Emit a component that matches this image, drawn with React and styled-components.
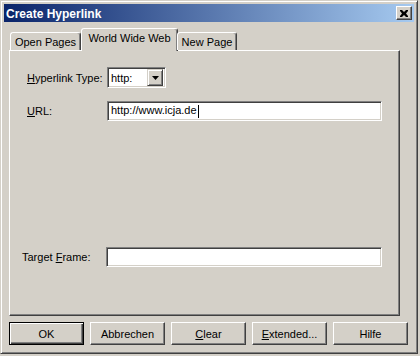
import React from 'react'
import styled, { createGlobalStyle } from 'styled-components'

const Global = createGlobalStyle`
    body {
        margin: 0;
        background: #d4d0c8;
        font-family: "Liberation Sans", Arial, sans-serif;
        font-size: 11px;
        color: #000;
    }
`

const Window = styled.div`
    width: 418px;
    height: 354px;
    box-sizing: border-box;
    background: #d4d0c8;
    border: 1px solid;
    border-color: #d4d0c8 #404040 #404040 #d4d0c8;
    box-shadow: inset 1px 1px #fff, inset -1px -1px #808080;
    padding: 3px;
    display: flex;
    flex-direction: column;
`

const TitleBar = styled.div`
    height: 18px;
    display: flex;
    align-items: center;
    justify-content: space-between;
    padding: 0 2px 0 2px;
    background: linear-gradient(to right, #0a246a, #a6caf0);
`

const Title = styled.span`
    color: #fff;
    font-weight: bold;
    font-size: 12px;
    padding-top: 1px;
`

const CloseBox = styled.div`
    width: 16px;
    height: 14px;
    box-sizing: border-box;
    background: #d4d0c8;
    border: 1px solid;
    border-color: #fff #404040 #404040 #fff;
    box-shadow: inset -1px -1px #808080;
    display: flex;
    align-items: center;
    justify-content: center;
`

const Body = styled.div`
    flex: 1;
    display: flex;
    flex-direction: column;
    padding: 6px 5px 0 5px;
`

const TabRow = styled.div`
    display: flex;
    align-items: flex-end;
    height: 22px;
    padding-left: 1px;
    position: relative;
    z-index: 1;
`

const Tab = styled.div`
    box-sizing: border-box;
    width: ${p => p.w}px;
    height: ${p => (p.active ? 23 : 18)}px;
    margin-bottom: ${p => (p.active ? -1 : 0)}px;
    background: #d4d0c8;
    border: 1px solid;
    border-bottom: none;
    border-color: #fff #404040 transparent #fff;
    border-radius: 3px 3px 0 0;
    box-shadow: inset -1px 0 #808080;
    display: flex;
    align-items: ${p => (p.active ? 'flex-start' : 'center')};
    padding-top: ${p => (p.active ? 3 : 0)}px;
    justify-content: center;
    font-size: 11px;
    white-space: nowrap;
    margin-right: ${p => (p.active ? -1 : 0)}px;
`

const Panel = styled.div`
    width: 391px;
    height: 266px;
    box-sizing: border-box;
    border: 1px solid;
    border-color: #fff #404040 #404040 #fff;
    box-shadow: inset -1px -1px #808080;
    display: flex;
    flex-direction: column;
    padding: 16px 17px 48px 17px;
`

const Row = styled.div`
    display: flex;
    align-items: center;
    margin-top: ${p => p.top || 0}px;
    margin-left: ${p => p.shift || 0}px;
`

const Label = styled.span`
    width: ${p => p.w || 80}px;
    flex: none;
`

const Sunken = styled.div`
    box-sizing: border-box;
    width: ${p => p.w}px;
    height: ${p => p.h}px;
    background: #fff;
    border: 1px solid;
    border-color: #808080 #fff #fff #808080;
    box-shadow: inset 1px 1px #404040, inset -1px -1px #d4d0c8;
    display: flex;
    align-items: center;
    padding: 0 2px 0 3px;
`

const Grow = styled.span`
    flex: 1;
`

const Caret = styled.span`
    display: inline-block;
    width: 1px;
    height: 13px;
    background: #000;
    margin-left: 1px;
    vertical-align: middle;
`

const DropButton = styled.div`
    width: 16px;
    height: 17px;
    box-sizing: border-box;
    background: #d4d0c8;
    border: 1px solid;
    border-color: #d4d0c8 #404040 #404040 #d4d0c8;
    box-shadow: inset 1px 1px #fff, inset -1px -1px #808080;
    display: flex;
    align-items: center;
    justify-content: center;
`

const ButtonRow = styled.div`
    display: flex;
    gap: 6px;
    margin-top: 6px;
`

const Button = styled.div`
    width: 75px;
    height: 23px;
    box-sizing: border-box;
    border: 1px solid;
    border-color: ${p => (p.primary ? '#000' : '#fff #404040 #404040 #fff')};
    box-shadow: ${p =>
        p.primary
            ? 'inset 1px 1px #fff, inset -1px -1px #404040, inset -2px -2px #808080'
            : 'inset -1px -1px #808080'};
    display: flex;
    align-items: center;
    justify-content: center;
    font-size: 11px;
`

export default function App() {
    return (
        <>
            <Global />
            <Window>
                <TitleBar>
                    <Title>Create Hyperlink</Title>
                    <CloseBox>
                        <svg width="8" height="7" viewBox="0 0 8 7">
                            <path d="M0 0h2l2 2 2-2h2v1L6 3.5 8 6v1H6L4 5 2 7H0V6l2-2.5L0 1z" fill="#000" />
                        </svg>
                    </CloseBox>
                </TitleBar>
                <Body>
                    <TabRow>
                        <Tab w={71}>Open Pages</Tab>
                        <Tab w={97} active>World Wide Web</Tab>
                        <Tab w={60}>New Page</Tab>
                    </TabRow>
                    <Panel>
                        <Row>
                            <Label><u>H</u>yperlink Type:</Label>
                            <Sunken w={59} h={21}>
                                <Grow>http:</Grow>
                                <DropButton>
                                    <svg width="7" height="4" viewBox="0 0 7 4">
                                        <path d="M0 0h7L3.5 4z" fill="#000" />
                                    </svg>
                                </DropButton>
                            </Sunken>
                        </Row>
                        <Row top={13}>
                            <Label><u>U</u>RL:</Label>
                            <Sunken w={275} h={20}>
                                <span>http://www.icja.de<Caret /></span>
                            </Sunken>
                        </Row>
                        <Row style={{ marginTop: 'auto' }} shift={-5}>
                            <Label w={84}>Target <u>F</u>rame:</Label>
                            <Sunken w={276} h={20} />
                        </Row>
                    </Panel>
                    <ButtonRow>
                        <Button primary>OK</Button>
                        <Button>Abbrechen</Button>
                        <Button><u>C</u>lear</Button>
                        <Button><u>E</u>xtended...</Button>
                        <Button>Hilfe</Button>
                    </ButtonRow>
                </Body>
            </Window>
        </>
    )
}
